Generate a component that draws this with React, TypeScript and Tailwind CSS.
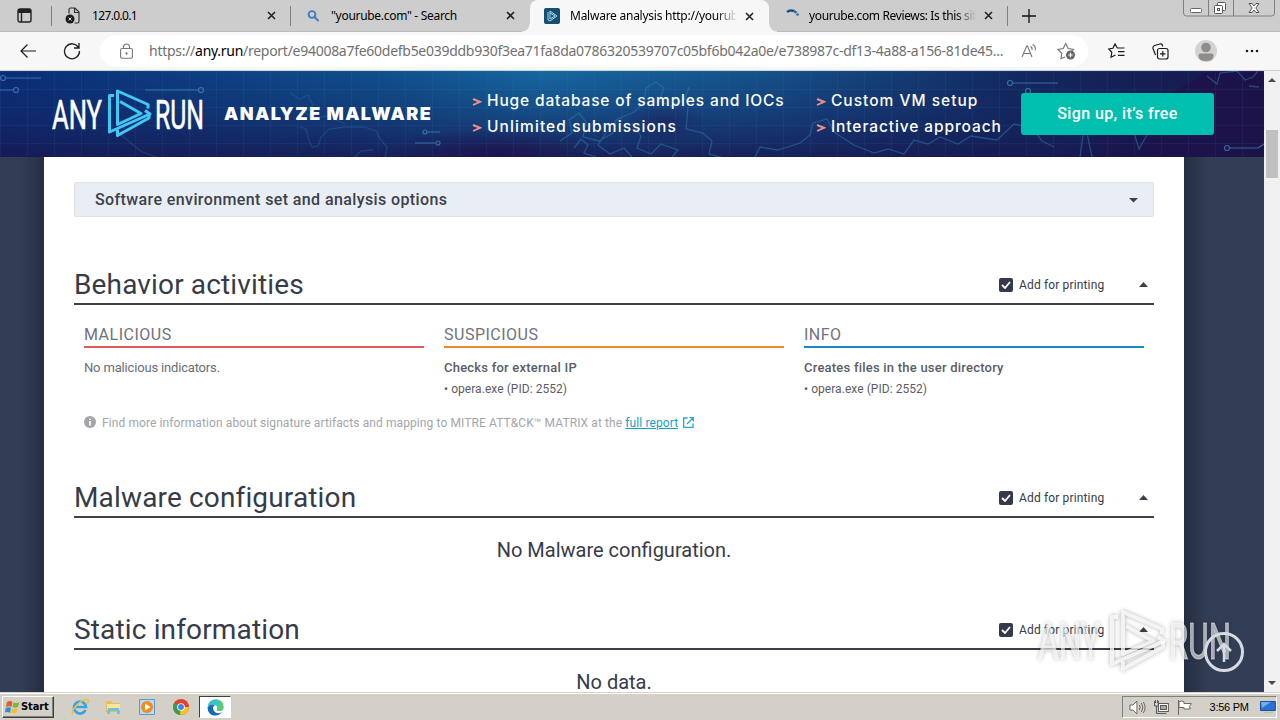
import type { ReactNode } from "react";
import { clsx } from "clsx";

type TabProps = {
  icon: ReactNode;
  title: string;
  active?: boolean;
  faded?: boolean;
  separator?: boolean;
  titleClassName?: string;
};

function CloseIcon() {
  return (
    <svg width="9" height="9" viewBox="0 0 9 9" className="shrink-0">
      <path d="M1 1l7 7M8 1l-7 7" stroke="#222" strokeWidth="1.6" />
    </svg>
  );
}

function Tab({ icon, title, active, faded, separator, titleClassName = "" }: TabProps) {
  return (
    <div
      className={clsx(
        "relative flex h-8 w-[239px] shrink-0 items-center pl-[13px] pr-[15px]",
        active ? "z-10 rounded-t-lg bg-[#f7f7f7]" : "border-b border-[#bdbdbd]"
      )}
    >
      {active && (
        <>
          <span className="absolute -left-2 bottom-0 size-2 bg-[radial-gradient(circle_at_0_0,#cdcdcd_7px,#f7f7f7_8px)]" />
          <span className="absolute -right-2 bottom-0 size-2 bg-[radial-gradient(circle_at_100%_0,#cdcdcd_7px,#f7f7f7_8px)]" />
        </>
      )}
      <span className="flex w-[27px] shrink-0 items-center">{icon}</span>
      <span
        className={clsx(
          "min-w-0 flex-1 overflow-hidden whitespace-nowrap text-[12px] leading-4 text-black",
          faded && "[mask-image:linear-gradient(to_right,black_88%,transparent)]",
          titleClassName
        )}
      >
        {title}
      </span>
      <span className="ml-[8px]">
        <CloseIcon />
      </span>
      {separator && <span className="absolute right-0 top-[6px] h-5 w-px bg-[#808080]" />}
    </div>
  );
}

function TabStrip() {
  return (
    <div className="flex h-8 shrink-0 bg-[#cdcdcd]">
      <div className="relative flex w-[52px] shrink-0 items-center border-b border-[#bdbdbd] pl-[17px]">
        <svg width="15" height="15" viewBox="0 0 15 15" fill="none" stroke="#222" strokeWidth="1.4">
          <rect x="1" y="1" width="13" height="13" rx="2" />
          <path d="M1 3h13" strokeWidth="4" />
          <path d="M4.5 4v10" />
        </svg>
        <span className="absolute right-0 top-[6px] h-5 w-px bg-[#808080]" />
      </div>
      <Tab
        separator
        title="127.0.0.1"
        titleClassName="tracking-[-0.65px]"
        icon={
          <svg width="16" height="17" viewBox="0 0 16 17" fill="none">
            <path d="M4 6.5V2.5Q4 1 5.500 1H10l4 4v9.500Q14 16 12.500 16H9.500M9.500 1v4.500H14" stroke="#333" strokeWidth="1.200" />
            <circle cx="5" cy="12" r="4.500" fill="#1b1b1b" />
            <path d="M3.500 10.500l3 3M6.500 10.500l-3 3" stroke="#ddd" />
          </svg>
        }
      />
      <Tab
        title={'"yourube.com" - Search'}
        titleClassName="tracking-[-0.3px]"
        icon={
          <svg width="18" height="14" viewBox="0 0 18 14" fill="none" stroke="#3f7cc0" strokeWidth="1.900" className="ml-[2px]">
            <circle cx="6" cy="5.500" r="3.400" />
            <path d="M8.500 8l4 4" />
          </svg>
        }
      />
      <Tab
        active
        faded
        title="Malware analysis http://yourub"
        titleClassName="tracking-[-0.25px]"
        icon={
          <span className="ml-px flex size-4 items-center justify-center rounded-[2px] bg-[#124f70]">
            <svg width="12" height="12" viewBox="0 0 12 12" fill="none" stroke="#a8dcf2">
              <path d="M2 2v8l2 1 7-5-7-5v8l5-3-5-3" />
            </svg>
          </span>
        }
      />
      <Tab
        separator
        faded
        title="yourube.com Reviews: Is this sit"
        titleClassName="tracking-[-0.37px]"
        icon={
          <svg width="16" height="16" viewBox="0 0 16 16" fill="none" strokeWidth="2.500" className="ml-[2px]">
            <path d="M3 4Q6 1.500 10 3" stroke="#1b5087" />
            <path d="M10 3Q13 4.500 14 7.500" stroke="#2f6ba4" strokeDasharray="3 1" />
          </svg>
        }
      />
      <div className="flex flex-1 border-b border-[#bdbdbd] pl-[14px]">
        <svg width="14" height="14" viewBox="0 0 14 14" className="mt-[9px]">
          <path d="M7 0v14M0 7h14" stroke="#111" strokeWidth="1.300" />
        </svg>
        <svg width="93" height="17" viewBox="0 0 93 17" fill="none" stroke="#808080" className="ml-[147px]">
          <path d="M.5 0v13q0 3 3 3h85q3 0 3-3V0M25.500 0v16M50.500 0v16" />
          <rect x="7.500" y="8.500" width="11" height="4" rx="1" fill="#fff" stroke="#666" />
          <g fill="#fff" stroke="#555">
            <rect x="34.500" y="2.500" width="8" height="8" rx="1" />
            <rect x="31.500" y="5.500" width="8" height="8" rx="1" />
            <rect x="34.500" y="8.500" width="2" height="2" />
            <path d="M66 3.500h3l2 2.500 2-2.500h3L72.800 8l3.200 4.500h-3L71 10l-2 2.500h-3L69.200 8z" />
          </g>
        </svg>
      </div>
    </div>
  );
}

function Toolbar() {
  return (
    <div className="flex h-[39px] shrink-0 items-center border-b border-[#c9d3d6] bg-[#f7f7f7] pl-5 pr-5">
      <svg width="16" height="14" viewBox="0 0 16 14" fill="none" stroke="#1b1b1b" strokeWidth="1.200">
        <path d="M16 7H1M7.500.5L1 7l6.500 6.500" />
      </svg>
      <svg width="18" height="18" viewBox="0 0 18 18" fill="none" stroke="#1b1b1b" strokeWidth="1.300" className="ml-[27px]">
        <path d="M15.500 5.500A7.500 7.500 0 1 0 16.500 9M16 1v5h-5" />
      </svg>
      <div className="ml-[19px] flex h-8 w-[988px] items-center rounded-full bg-white pl-5 pr-3">
        <svg width="13" height="16" viewBox="0 0 13 16" fill="none" stroke="#777" strokeWidth="1.100">
          <rect x=".6" y="5.500" width="11.800" height="9.800" rx="1.500" />
          <path d="M3.500 5.500V4a3 3 0 0 1 6 0v1.500" />
          <circle cx="6.500" cy="10.500" r=".6" fill="#777" />
        </svg>
        <span className="ml-4 w-[858px] whitespace-nowrap text-[14px] leading-5 tracking-[-0.275px] text-[#707070]">
          https://<span className="text-black">any.run</span>
          /report/e94008a7fe60defb5e039ddb930f3ea71fa8da0786320539707c05bf6b042a0e/e738987c-df13-4a88-a156-81de45...
        </span>
        <svg width="17" height="16" viewBox="0 0 17 16" fill="none" stroke="#777" strokeWidth="1.100" className="ml-[14px] shrink-0">
          <path d="M1 14L5.700 3h.8L11 14M2.600 10.500h7M9.500 3.500q2 1 1.500 3.500M11.500 1.500q4 2 2.500 6" />
        </svg>
        <svg width="19" height="18" viewBox="0 0 19 18" fill="none" stroke="#777" strokeWidth="1.200" className="ml-[19px] shrink-0">
          <path d="M8 15l-4 1.500.7-5L1 7.500 6.200 6.500 8.700 1.500l2.500 5 5.300.8-2 2" />
          <circle cx="13.500" cy="13" r="4.500" fill="#666" stroke="none" />
          <path d="M13.500 10.800v4.400M11.300 13h4.400" stroke="#fff" />
        </svg>
      </div>
      <svg width="17" height="16" viewBox="0 0 17 16" fill="none" stroke="#1b1b1b" strokeWidth="1.200" className="ml-5">
        <path d="M11 5L9.300 5 7 .9 4.900 5.300.8 6l3 3.300-.8 5L7.500 12M11 5h5.500M10 8.700h6.500M10 12.300h6.500" />
      </svg>
      <svg width="17" height="17" viewBox="0 0 17 17" fill="none" stroke="#1b1b1b" strokeWidth="1.200" className="ml-[27px]">
        <rect x="5.500" y="5.500" width="10.500" height="10.500" rx="2" />
        <path d="M3.500 12L1 5.500Q.5 3.500 2.500 2.500L8 1q2-.5 2.500 1.500l.3 1M10.800 8v5.500M8 10.800h5.500" />
      </svg>
      <svg width="22" height="22" viewBox="0 0 22 22" className="ml-[26px]">
        <circle cx="11" cy="11" r="11" fill="#d5d3d1" />
        <circle cx="11" cy="7.500" r="4.800" fill="#8f8c8a" />
        <path d="M3.500 15.500q0-2 2-2h11q2 0 2 2 0 5.500-7.500 5.500t-7.500-5.500z" fill="#8f8c8a" />
      </svg>
      <svg width="14" height="4" viewBox="0 0 14 4" fill="#1b1b1b" className="ml-7">
        <circle cx="2" cy="2" r="1.300" />
        <circle cx="7" cy="2" r="1.300" />
        <circle cx="12" cy="2" r="1.300" />
      </svg>
    </div>
  );
}

function Logo() {
  return (
    <svg
      width="152"
      height="49"
      viewBox="0 0 152 49"
      fill="#fff"
      stroke="#fff"
      strokeWidth=".6"
      fontFamily="'Liberation Sans Narrow', 'Roboto', sans-serif"
    >
      <text x="0" y="39.500" fontSize="41" textLength="50" lengthAdjust="spacingAndGlyphs">ANY</text>
      <g fill="none" stroke="#42c8f5" strokeWidth="3" strokeLinejoin="round">
        <path d="M62 6.500H57.500V43L98 25L93 21.500" />
        <path d="M96 19.500V15.500L65.500 2V35.500L89 24.500L68 12.500" />
        <path d="M65.500 40.500V46.500L97 29V25" />
      </g>
      <text x="103" y="39.500" fontSize="41" textLength="49" lengthAdjust="spacingAndGlyphs">RUN</text>
    </svg>
  );
}

function BannerArt() {
  return (
    <svg className="absolute inset-0" width="1264" height="86" viewBox="0 0 1264 86" fill="none">
      <defs>
        <linearGradient id="sea" x1="0" x2="1264" y1="0" y2="0" gradientUnits="userSpaceOnUse">
          <stop offset="0" stopColor="#0a2d76" />
          <stop offset=".3" stopColor="#104f8c" />
          <stop offset=".43" stopColor="#1668a0" />
          <stop offset=".62" stopColor="#154f88" />
          <stop offset=".8" stopColor="#122a60" />
          <stop offset="1" stopColor="#181448" />
        </linearGradient>
        <linearGradient id="deep" x1="0" x2="0" y1="0" y2="86" gradientUnits="userSpaceOnUse">
          <stop offset="0" stopColor="#15205c" stopOpacity="0" />
          <stop offset=".5" stopColor="#15205c" stopOpacity=".4" />
          <stop offset="1" stopColor="#181850" stopOpacity=".85" />
        </linearGradient>
        <linearGradient id="night" x1="1060" x2="1160" y1="0" y2="0" gradientUnits="userSpaceOnUse">
          <stop offset="0" stopColor="#1c1148" stopOpacity="0" />
          <stop offset="1" stopColor="#1c1148" stopOpacity=".8" />
        </linearGradient>
        <radialGradient id="dusk">
          <stop offset="0" stopColor="#200f4c" stopOpacity=".8" />
          <stop offset="1" stopColor="#200f4c" stopOpacity="0" />
        </radialGradient>
        <pattern id="grid" width="27" height="18" patternUnits="userSpaceOnUse">
          <path d="M0 .5H27M.5 0V18" stroke="#4a9bd0" strokeOpacity=".08" />
        </pattern>
      </defs>
      <rect width="1264" height="86" fill="url(#sea)" />
      <rect width="1264" height="86" fill="url(#deep)" />
      <path d="M1060 86L1210 0h54v86z" fill="url(#night)" />
      <ellipse cx="500" cy="84" rx="120" ry="26" fill="url(#dusk)" />
      <ellipse cx="665" cy="50" rx="45" ry="20" fill="url(#dusk)" opacity=".5" />
      <rect width="1264" height="86" fill="url(#grid)" />
      <g stroke="#2d7eb2" strokeOpacity=".5" strokeWidth="1.300">
        <path d="M290 22l10 6 8-4 5 10-8 8 10 5 12-2 18 8M300 56l6 2 3 12 3 6 6-1 3-9 8-8 15-2 20 0 12 4 4 8 7 8-2 12M125 55l-5 8 12 10 10 8 15 5M355 86l6-6 12-1" strokeOpacity=".3" />
        <path d="M574 77l7-9 7 6-4 8 12 4M560 70l12-8-3-13 10-7 7 9-3 15 16 4 14-8 3-13 18-8 10-9 2-15 10-6 8 6-5 13 12 5 14-7 4-12M607 60l-9 14 12 9 14-6 8 9M632 52l9 13-4 12 14 6 10-10 17 6-6 7M688 36l-2 22 17 4 9 8-3 13 18 5" />
        <path d="M755 86l5-10 18 3 22-7 10-8 3-12 14-4 7 13 20 13 20 8 14-4 16 5 10-14 14 4 12-7 18 7 13-8 26 4 17-16 18 4 10 13 12 6M1080 86l4-28M1092 86l-5-24M1134 62l5 16 9-16M1207 5l10 8 3-11 17-2 8 9 8-3 5-6M1249 15l10 1" />
      </g>
      <g stroke="#458bc2" strokeOpacity=".7" strokeWidth="1.200">
        <circle cx="3" cy="7" r="2.500" />
        <path d="M6 7h35M0 19h13M145 19h53M1013 12h45M1230 77h28l6-4M428 61h12M415 72h20" />
        <circle cx="16" cy="19" r="2.500" />
        <circle cx="201" cy="19" r="2.500" />
        <circle cx="1010" cy="12" r="2.500" />
        <circle cx="1028" cy="20" r="2.500" />
        <circle cx="1227" cy="77" r="2.500" />
        <circle cx="425" cy="61" r="2" />
        <circle cx="438" cy="72" r="2" />
      </g>
    </svg>
  );
}

function Bullet({ children, className }: { children: ReactNode; className: string }) {
  return (
    <li className={clsx("flex h-[26px] items-center whitespace-nowrap", className)}>
      <svg width="10" height="8" viewBox="0 0 10 8" fill="none" stroke="#f78b87" strokeWidth="1.900" className="mr-[5px] mt-px shrink-0">
        <path d="M1 1l7 2.800L1 7" />
      </svg>
      {children}
    </li>
  );
}

function Banner() {
  return (
    <header className="relative h-[86px] overflow-hidden font-['Inter',sans-serif] text-white">
      <BannerArt />
      <div className="relative flex h-full">
        <div className="ml-[52px] mt-[18px]">
          <Logo />
        </div>
        <h1 className="ml-[20px] mt-[32px] w-[248px] whitespace-nowrap text-[18px] font-black leading-[22px] tracking-[1.4px]">
          ANALYZE MALWARE
        </h1>
        <ul className="mt-[17px] w-[344px] text-[15.500px] font-medium">
          <Bullet className="tracking-[0.85px]">Huge database of samples and IOCs</Bullet>
          <Bullet className="tracking-[1.1px]">Unlimited submissions</Bullet>
        </ul>
        <ul className="mt-[17px] w-[205px] text-[15.500px] font-medium">
          <Bullet className="tracking-[1px]">Custom VM setup</Bullet>
          <Bullet className="tracking-[0.9px]">Interactive approach</Bullet>
        </ul>
        <button className="mt-[22px] h-[42px] w-[193px] rounded-[3px] bg-[#00bfaf] font-['Roboto',sans-serif] text-[16px] font-medium tracking-[0.4px]">
          Sign up, it’s free
        </button>
      </div>
    </header>
  );
}

function SectionHeader({ title, className = "" }: { title: string; className?: string }) {
  return (
    <div className={clsx("flex h-[42px] items-center border-b-2 border-[#3c404b]", className)}>
      <h2 className="flex-1 whitespace-nowrap pt-[3px] text-[28px] leading-10 tracking-[0.15px] text-[#373b48]">{title}</h2>
      <span className="mt-[3px] flex size-[14px] items-center justify-center rounded-[2px] bg-[#343a49]">
        <svg width="10" height="8" viewBox="0 0 10 8" fill="none" stroke="#fff" strokeWidth="1.800">
          <path d="M1 4l3 3 5-6" />
        </svg>
      </span>
      <span className="ml-[6px] mt-[3px] w-[85px] whitespace-nowrap text-[12px] leading-4 tracking-[0.15px] text-[#373b48]">
        Add for printing
      </span>
      <svg width="9" height="5" viewBox="0 0 9 5" fill="#3c404b" className="ml-[35px] mr-[6px] mt-[3px]">
        <path d="M0 5L4.500 0 9 5z" />
      </svg>
    </div>
  );
}

type ColumnProps = {
  label: string;
  lineClassName: string;
  heading?: string;
  text: string;
};

function Column({ label, lineClassName, heading, text }: ColumnProps) {
  return (
    <div className="w-[340px]">
      <h3 className={clsx("h-[25px] border-b-2 text-[16px] leading-[24px] tracking-[0.5px] text-[#70727c]", lineClassName)}>
        {label}
      </h3>
      <div className="pt-[9px] text-[12px] leading-[21px] text-[#5b5d66]">
        {heading && <p className="mb-px text-[13px] font-medium tracking-[0.22px]">{heading}</p>}
        <p className={clsx(heading ? "tracking-[0.05px]" : "text-[13px] tracking-[-0.17px] text-[#6b6d75]")}>{text}</p>
      </div>
    </div>
  );
}

function Report() {
  return (
    <main className="ml-11 h-[535px] w-[1140px] overflow-hidden bg-white px-[30px] pt-[25px]">
      <div className="flex h-[35px] items-center justify-between rounded-[2px] border border-[#dde3e9] bg-[#e9eef4] pl-5 pr-[15px] text-[16px] font-medium tracking-[0.39px] text-[#3c404b]">
        Software environment set and analysis options
        <svg width="9" height="5" viewBox="0 0 9 5" fill="#3c404b" className="mt-px">
          <path d="M0 0h9L4.500 4.500z" />
        </svg>
      </div>

      <SectionHeader title="Behavior activities" className="mt-[46px]" />
      <div className="flex h-[92px] gap-5 px-[10px] pt-[18px]">
        <Column label="MALICIOUS" lineClassName="border-[#e25a5c]" text="No malicious indicators." />
        <Column
          label="SUSPICIOUS"
          lineClassName="border-[#ee8b28]"
          heading="Checks for external IP"
          text="• opera.exe (PID: 2552)"
        />
        <Column
          label="INFO"
          lineClassName="border-[#1a86c4]"
          heading="Creates files in the user directory"
          text="• opera.exe (PID: 2552)"
        />
      </div>
      <p className="flex h-[79px] items-start whitespace-nowrap px-[10px] pt-[18px] text-[12px] leading-4 tracking-[0.1px] text-[#a4a5aa]">
        <svg width="12" height="12" viewBox="0 0 12 12" className="mr-[6px] mt-px">
          <circle cx="6" cy="6" r="6" fill="#a4a5aa" />
          <path d="M6 2.500v1.500M6 5v4.500" stroke="#fff" strokeWidth="1.700" />
        </svg>
        Find more information about signature artifacts and mapping to MITRE ATT&amp;CK™ MATRIX at the&nbsp;
        <a className="text-[#149fc8] underline">full report</a>
        <svg width="11" height="11" viewBox="0 0 11 11" fill="none" stroke="#26a8cc" strokeWidth="1.300" className="ml-[5px] mt-[2px]">
          <path d="M4.500 1H.7v9.300H10V6.500M6.500.7h3.800v3.800M10 1L4 7" />
        </svg>
      </p>

      <SectionHeader title="Malware configuration" />
      <p className="h-[90px] pt-[20px] text-center text-[20px] leading-6 text-[#373b48]">No Malware configuration.</p>

      <SectionHeader title="Static information" />
      <p className="pt-[20px] text-center text-[20px] leading-6 text-[#373b48]">No data.</p>
    </main>
  );
}

function Watermark() {
  return (
    <svg
      className="pointer-events-none absolute left-[1034px] top-[536px] drop-shadow-[0_0_2px_rgba(0,0,0,0.4)]"
      width="204"
      height="68"
      viewBox="-4 -2 204 68"
      fill="#fff"
      fillOpacity=".6"
      fontFamily="'Liberation Sans Narrow', 'Roboto', sans-serif"
    >
      <text x="0" y="50" fontSize="50" textLength="62" lengthAdjust="spacingAndGlyphs" stroke="#fff" strokeOpacity=".5">ANY</text>
      <g fill="none" stroke="#fff" strokeOpacity=".75" strokeWidth="4" strokeLinejoin="round">
        <path d="M80 8h-6v47l52-23-6-4" />
        <path d="M124 25v-5L85 3v42l30-13-27-15" />
        <path d="M85 52v8l40-22v-6" />
      </g>
      <text x="131" y="50" fontSize="50" textLength="62" lengthAdjust="spacingAndGlyphs" stroke="#fff" strokeOpacity=".5">RUN</text>
    </svg>
  );
}

function Scrollbar() {
  return (
    <div className="flex w-4 shrink-0 flex-col items-center justify-between bg-[#f1f1f1] py-[7px]">
      <svg width="8" height="4" viewBox="0 0 8 4" fill="#4a4a4a">
        <path d="M0 4L4 0l4 4z" />
      </svg>
      <div className="mb-auto mt-[48px] h-12 w-3 bg-[#c1c1c1]" />
      <svg width="8" height="4" viewBox="0 0 8 4" fill="#4a4a4a">
        <path d="M0 0h8L4 4z" />
      </svg>
    </div>
  );
}

function Taskbar() {
  return (
    <footer className="flex h-7 shrink-0 items-center border-t border-[#d4d0c8] bg-[#d4d0c8] pl-[2px] pr-[3px] pt-px shadow-[inset_0_1px_0_#fff] font-['Liberation_Sans',sans-serif] text-[11px] text-black">
      <button className="flex h-[22px] w-[52px] items-center border border-b-[#404040] border-l-white border-r-[#404040] border-t-white pl-[2px] font-['DejaVu_Sans_Condensed','DejaVu_Sans',sans-serif] text-[11px] font-bold tracking-[-0.1px] shadow-[inset_-1px_-1px_0_#808080]">
        <svg width="15" height="14" viewBox="0 0 15 14" className="mr-[1px] shrink-0">
          <path d="M2 2q3-2 5.500 0L6.500 7Q4 5.500 1 7z" fill="#e8582a" />
          <path d="M8.500 2.500q3 1 6-.5l-1.500 5q-3 1.500-5.500 0z" fill="#7cb93a" />
          <path d="M.8 8Q3.500 6.500 6 8l-1 5Q3 11.500 0 12.500z" fill="#2f8ed6" />
          <path d="M7 8.500q3 1 5.800-.5l-1.300 4.500q-3 1.500-5.500.5z" fill="#f7bd27" />
        </svg>
        Start
      </button>
      {/* Internet Explorer */}
      <svg width="18" height="18" viewBox="0 0 18 18" fill="none" className="ml-[17px]">
        <path d="M14.500 12A6 6 0 1 1 15 9H5" stroke="#38a4e2" strokeWidth="2.700" />
        <path d="M2 16Q-1 14 6 7t11-5q1 1-1 4" stroke="#ecc044" strokeWidth="1.500" />
      </svg>
      {/* Explorer */}
      <svg width="16" height="16" viewBox="0 0 16 16" className="ml-4">
        <path d="M1 2h5l1 2h8v9H1z" fill="#e8bd58" />
        <path d="M2 5h13v6H2z" fill="#fbe69a" />
        <path d="M3 9h11l1 6h-3v-3H5v3H2z" fill="#73bfe0" />
      </svg>
      {/* Media Player */}
      <svg width="16" height="16" viewBox="0 0 16 16" className="ml-[18px]">
        <path d="M.5.5h15v15H.5z" fill="#b8daf4" stroke="#5a9bd0" />
        <circle cx="8" cy="8" r="6" fill="#f28a1d" />
        <path d="M6 4.500v7L11.500 8z" fill="#fff" />
      </svg>
      {/* Chrome */}
      <svg width="16" height="16" viewBox="0 0 16 16" className="ml-[18px]">
        <circle cx="8" cy="8" r="8" fill="#e4402f" />
        <path d="M8 8L1.100 4A8 8 0 0 0 8 16z" fill="#33a24f" />
        <path d="M8 8h8a8 8 0 0 1-8 8l-1-1z" fill="#f7c526" />
        <circle cx="8" cy="8" r="3.800" fill="#fff" />
        <circle cx="8" cy="8" r="2.900" fill="#3f82ea" />
      </svg>
      {/* Edge */}
      <span className="ml-[10px] flex h-[22px] w-8 items-center justify-center border border-b-white border-l-[#404040] border-r-white border-t-[#404040] bg-white">
        <svg width="17" height="17" viewBox="0 0 17 17">
          <path d="M.5 8.500A8 8 0 0 1 16.500 8q0 4-4 4-3.500 0-2.500-2 1-3-2-4Q3 4.500.5 8.500z" fill="#36c4c8" />
          <path d="M9 .6Q16.500 1 16.500 8q0 4-4 4-3.500 0-2.500-2Q15 5 9 .6z" fill="#59cc78" />
          <path d="M.5 8.500Q3 4.500 8 6q-3.500 2-1 6 3 4 8 1-3 4-8 3.500-6-1-6.500-8z" fill="#1468b8" />
        </svg>
      </span>
      <div className="ml-auto flex h-[22px] w-[155px] items-center border border-b-white border-l-[#808080] border-r-white border-t-[#808080] pl-[6px]">
        <svg width="17" height="15" viewBox="0 0 17 15" fill="none" stroke="#666">
          <path d="M1 5h3l4-4v13l-4-4H1z" fill="#fff" />
          <path d="M10.500 5q1.500 2.500 0 5M12.500 3q3 4.500 0 9M14.500 2q3.500 5.500 0 11" />
        </svg>
        <svg width="17" height="15" viewBox="0 0 17 15" fill="none" stroke="#555" className="ml-[7px]">
          <rect x="5.500" y="3.500" width="10" height="8" fill="#fff" />
          <rect x="7.500" y="5.500" width="6" height="4" fill="#aaa" />
          <path d="M1.500 1v5h4V1M3.500 6v7.500h10M2.500 0v3M4.500 0v3" />
        </svg>
        <svg width="16" height="15" viewBox="0 0 16 15" fill="#fff" stroke="#666" className="ml-[7px]">
          <path d="M1.500 0v15M2 1.500q3-1 5 0v2h7.500l-2 3 1 2.500H7V7.500H2z" />
        </svg>
        <span className="ml-[17px] w-[41px] whitespace-nowrap tracking-[-0.25px]">3:56 PM</span>
        <svg width="16" height="14" viewBox="0 0 16 14" className="ml-[10px]">
          <path d="M.5 1.500h15v9H.5z" fill="#2d72d2" stroke="#174b99" />
          <path d="M1 2h10L2 8z" fill="#73aef0" />
          <path d="M4 12.500h9" stroke="#bbb" />
        </svg>
      </div>
    </footer>
  );
}

export default function App() {
  return (
    <div className="flex h-[720px] w-[1280px] flex-col overflow-hidden bg-[#f7f7f7] font-['Noto_Sans',sans-serif]">
      <TabStrip />
      <Toolbar />
      <div className="flex min-h-0 flex-1">
        <div className="relative w-[1264px] overflow-hidden bg-[#323e56] font-['Roboto',sans-serif]">
          <Banner />
          <div className="bg-[linear-gradient(to_right,#323e56_0,#323e56_20px,#252f42_44px,#252f42_1184px,#323e56_1208px)]">
            <Report />
          </div>
          <Watermark />
          <div className="absolute left-[1204px] top-[561px] flex size-10 items-center justify-center rounded-full border-[3px] border-[#d6dae2]">
            <svg width="18" height="21" viewBox="0 0 18 21" fill="none" stroke="#d6dae2" strokeWidth="2.500">
              <path d="M9 20V2M2 9l7-7 7 7" />
            </svg>
          </div>
        </div>
        <Scrollbar />
      </div>
      <Taskbar />
    </div>
  );
}
